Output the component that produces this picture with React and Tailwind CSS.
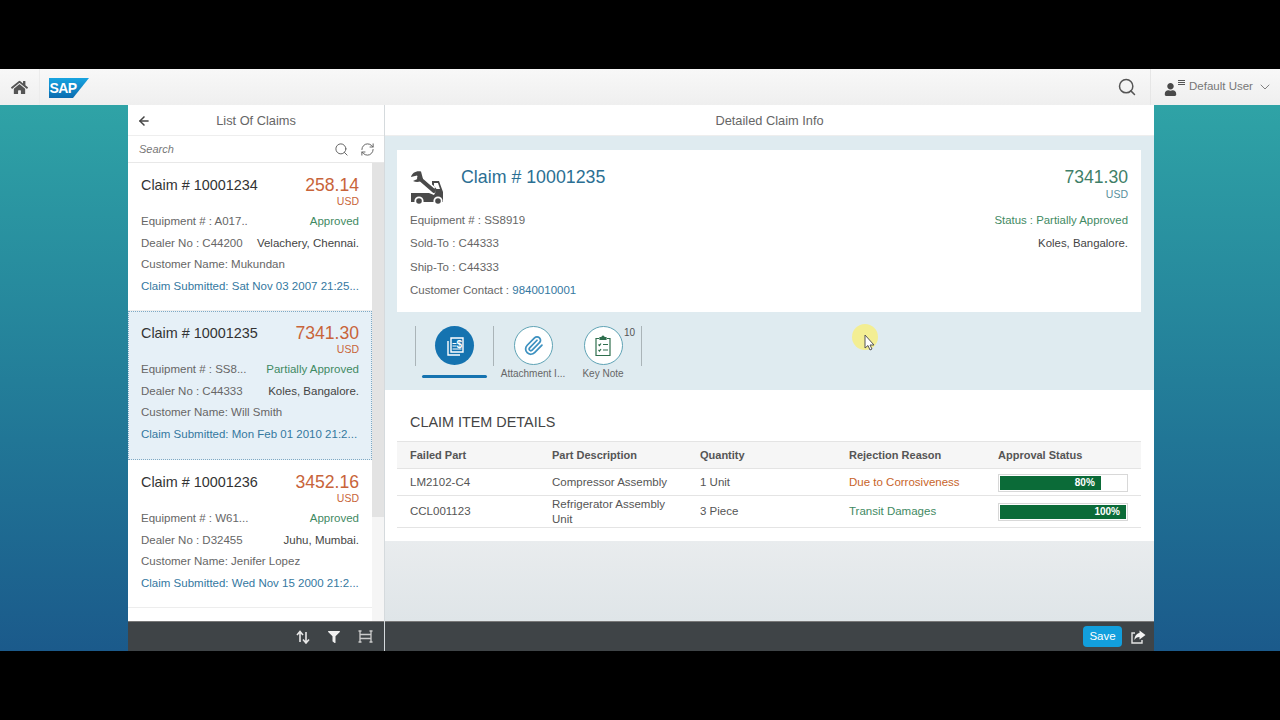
import { ArrowLeft, ChevronDown, Paperclip, RefreshCw, Search } from "lucide-react";
import { FaFilter, FaHome, FaUser } from "react-icons/fa";

const claims = [
    { id: "10001234", amount: "258.14", equipment: "A017..", status: "Approved", dealer: "C44200", place: "Velachery, Chennai.", customer: "Mukundan", submitted: "Sat Nov 03 2007 21:25..." },
    { id: "10001235", amount: "7341.30", equipment: "SS8...", status: "Partially Approved", dealer: "C44333", place: "Koles, Bangalore.", customer: "Will Smith", submitted: "Mon Feb 01 2010 21:2...", selected: true },
    { id: "10001236", amount: "3452.16", equipment: "W61...", status: "Approved", dealer: "D32455", place: "Juhu, Mumbai.", customer: "Jenifer Lopez", submitted: "Wed Nov 15 2000 21:2..." },
];

const SapLogo = () => (
    <svg width="40" height="20" viewBox="0 0 40 20">
        <defs>
            <linearGradient id="sapBlue" x1="0" y1="0" x2="0" y2="1">
                <stop offset="0" stopColor="#18a4e0" />
                <stop offset="1" stopColor="#0a6cb0" />
            </linearGradient>
        </defs>
        <polygon points="0,0 40,0 24,20 0,20" fill="url(#sapBlue)" />
        <text x="0.5" y="15" fontFamily="Liberation Sans" fontWeight="700" fontSize="14" fill="#fff" letterSpacing="-0.6">SAP</text>
    </svg>
);

const TowTruck = () => (
    <svg width="34" height="34" viewBox="0 0 34 34" fill="#4a4a4a">
        <path d="M1 22 H19 L24 24 L26 20 L22 14 V10 H29 L33 21 V31 H1 Z" />
        <path d="M24 12 V15 L26.5 18 H30 L28 12 Z" fill="#fff" />
        <path d="M9 7 L23 19" stroke="#fff" strokeWidth="7" />
        <path d="M9 7 L24 20" stroke="#4a4a4a" strokeWidth="4" strokeLinecap="round" />
        <path d="M11 0.5 C6 -0.5 2 2 1 6 L7 4.5 L8.5 7.5 L3 10 C7 12 11 11 13 8 Z" />
        <circle cx="9" cy="30" r="4.6" fill="#fff" />
        <circle cx="9" cy="30" r="2.8" />
        <circle cx="28" cy="30" r="4.6" fill="#fff" />
        <circle cx="28" cy="30" r="2.8" />
    </svg>
);

const InvoiceIcon = () => (
    <svg width="22" height="22" viewBox="0 0 22 22" fill="none" stroke="#fff" strokeWidth="1.4">
        <path d="M7 3 H19 V17 H7 Z" />
        <path d="M4 6 V20 H16" />
        <path d="M8.5 8.5 H12.5 M8.5 11 H12.5 M8.5 14 H17.5" strokeWidth="1.2" />
        <text x="12.6" y="12.5" fontFamily="Liberation Sans" fontWeight="700" fontSize="10" fill="#fff" stroke="none">$</text>
    </svg>
);

const ClipboardIcon = () => (
    <svg width="20" height="22" viewBox="0 0 20 22" fill="none" stroke="#2f6f4e" strokeWidth="1.2">
        <path d="M6 3.5 H3 V20.5 H17 V3.5 H14" />
        <path d="M7 4.5 V2.5 H8.5 L10 1 L11.5 2.5 H13 V4.5 Z" fill="#2f6f4e" />
        <path d="M5.5 9.5 L6.5 10.5 L8 8.5 M10 9.5 H15 M5.5 15 L6.5 16 L8 14 M10 15 H15" />
    </svg>
);

const SortIcon = () => (
    <svg width="14" height="14" viewBox="0 0 14 14" fill="none" stroke="#e8e8e8" strokeWidth="1.6">
        <path d="M4 12 V2 M1 5 L4 1.5 L7 5" />
        <path d="M10 2 V13 M7 9.5 L10 13 L13 9.5" />
    </svg>
);

const ColumnsIcon = () => (
    <svg width="15" height="13" viewBox="0 0 15 13" fill="none" stroke="#ccc" strokeWidth="1.3">
        <path d="M2 1 V12 M13 1 V12 M0.5 1 H3.5 M11.5 1 H14.5 M0.5 12 H3.5 M11.5 12 H14.5 M2 4.5 H13 M2 8.5 H13" />
    </svg>
);

const ShareIcon = () => (
    <svg width="15" height="14" viewBox="0 0 15 14">
        <path d="M4 3 H1 V13 H11 V10" fill="none" stroke="#e4e4e4" strokeWidth="1.4" />
        <path d="M8.5 0.5 L14.5 5 L8.5 9.5 V7 C6 7 4.5 8 3.5 10 C3.5 6 5.5 3.5 8.5 3 Z" fill="#f4f4f4" />
    </svg>
);

const ClaimCard = ({ claim }) => (
    <div className={claim.selected
        ? "h-[149px] px-[12px] pt-[10px] bg-[#e6f0f7] border border-dotted border-[#7fa9c4]"
        : "h-[148px] px-[13px] pt-[11px] bg-white border-b border-[#ededed]"}>
        <div className="flex justify-between items-start h-[37px]">
            <span className="text-[14.4px] text-[#333] leading-[21px] mt-[1px]">Claim # {claim.id}</span>
            <div className="text-right text-[#c8643a]">
                <div className="text-[17.6px] leading-[22px]">{claim.amount}</div>
                <div className="text-[10.5px] leading-[11px]">USD</div>
            </div>
        </div>
        <div className="text-[11.5px] text-[#666] leading-[21.5px]">
            <div className="flex justify-between">
                <span>Equipment # : {claim.equipment}</span>
                <span className="text-[#3f8a63]">{claim.status}</span>
            </div>
            <div className="flex justify-between">
                <span>Dealer No : {claim.dealer}</span>
                <span className="text-[#444]">{claim.place}</span>
            </div>
            <div>Customer Name: {claim.customer}</div>
            <div className="text-[#34789f] whitespace-nowrap">Claim Submitted: {claim.submitted}</div>
        </div>
    </div>
);

const Tab = ({ label, badge, active, children }) => (
    <div className="relative w-[70px] flex flex-col items-center pt-[14px]">
        <div className={`w-[39px] h-[39px] rounded-full flex items-center justify-center ${active ? "bg-[#1573b0]" : "bg-white border border-[#5fa3b5]"}`}>
            {children}
        </div>
        {badge && <span className="absolute top-[13px] right-[3px] text-[10px] text-[#555]">{badge}</span>}
        {label && <span className="mt-[2px] text-[10px] text-[#666] whitespace-nowrap h-[13px] leading-[13px]">{label}</span>}
        {active && <div className="w-[65px] h-[3px] bg-[#1573b0] mt-[10px] rounded-sm" />}
    </div>
);

const ProgressBar = ({ value }) => (
    <div className="w-[130px] h-[18px] bg-white border border-[#d8d8d8] p-px">
        <div className="h-full bg-[#0b6b38] text-right text-white text-[10px] font-bold leading-[14px] pr-[6px]" style={{ width: `${value}%` }}>{value}%</div>
    </div>
);

const rowClass = "grid grid-cols-[142px_148px_149px_149px_156px] items-center border-b border-[#e4e4e4] text-[11.5px] text-[#555]";

export default function App() {
    return (
        <div className="w-[1280px] h-[720px] bg-black flex flex-col pt-[69px] pb-[69px] overflow-hidden font-['Liberation_Sans',Arial,sans-serif]">
            <div className="h-[36px] shrink-0 bg-gradient-to-b from-[#f8f8f8] to-[#efefef] flex items-center">
                <div className="w-[40px] flex justify-center border-r border-[#ececec] h-full items-center">
                    <FaHome size={17} className="text-[#555]" />
                </div>
                <div className="ml-[9px] mt-[2px]"><SapLogo /></div>
                <div className="flex-1" />
                <Search size={20} strokeWidth={1.8} className="text-[#555] mr-[13px]" />
                <div className="h-full border-l border-[#e6e6e6] flex items-center pl-[13px] w-[130px] text-[#777] text-[11.5px] whitespace-nowrap">
                    <FaUser size={13} className="text-[#4a4a4a] mt-[4px] shrink-0" />
                    <div className="w-[7px] mr-[4px] mb-[9px] flex flex-col gap-px ml-px shrink-0">
                        <div className="h-px bg-[#555]" />
                        <div className="h-px bg-[#555]" />
                        <div className="h-px bg-[#555]" />
                    </div>
                    <span>Default User</span>
                    <ChevronDown size={16} strokeWidth={1.4} className="ml-[4px] shrink-0" />
                </div>
            </div>

            <div className="relative flex-1 min-h-0 flex justify-center pl-[2px] bg-gradient-to-b from-[#2fa3a6] to-[#1b5a8b]">
                <div className="w-[257px] flex flex-col border-r border-[#d5dadd]">
                    <div className="h-[31px] pt-px bg-white flex items-center relative justify-center text-[12.8px] text-[#666] border-b border-[#eee]">
                        <ArrowLeft size={14} strokeWidth={2.6} className="absolute left-[9px] text-[#444]" />
                        <span>List Of Claims</span>
                    </div>
                    <div className="h-[27px] bg-white flex items-center pl-[11px] pr-[9px] border-b border-[#e8e8e8]">
                        <span className="flex-1 italic text-[11px] text-[#777]">Search</span>
                        <Search size={15} strokeWidth={1.6} className="text-[#666] mr-[11px]" />
                        <RefreshCw size={15} strokeWidth={1.6} className="text-[#666]" />
                    </div>
                    <div className="flex-1 min-h-0 flex bg-white overflow-hidden">
                        <div className="w-[244px] shrink-0">
                            {claims.map((c) => <ClaimCard key={c.id} claim={c} />)}
                        </div>
                        <div className="flex-1 flex flex-col">
                            <div className="h-[354px] bg-[#e3e3e3]" />
                            <div className="flex-1 bg-[#f5f5f5]" />
                        </div>
                    </div>
                    <div className="h-[30px] bg-[#3f4447] border-t border-[#777] flex items-center justify-end gap-[18px] pr-[11px] text-white">
                        <SortIcon />
                        <FaFilter size={12} className="text-[#f0f0f0]" />
                        <ColumnsIcon />
                    </div>
                </div>

                <div className="w-[769px] flex flex-col">
                    <div className="h-[31px] pt-px bg-white flex items-center justify-center text-[12.8px] text-[#666] border-b border-[#eee]">Detailed Claim Info</div>
                    <div className="h-[254px] bg-[#dfebf0] pl-[12px] pr-[13px] pt-[14px] flex flex-col">
                        <div className="h-[162px] bg-white px-[13px] pt-[15px] text-[11.5px] text-[#666] shrink-0">
                            <div className="flex justify-between items-start h-[44px]">
                                <div className="flex items-start">
                                    <div className="mt-[6px] w-[51px]"><TowTruck /></div>
                                    <span className="text-[17.8px] text-[#2b6f93] leading-[24px]">Claim # 10001235</span>
                                </div>
                                <div className="text-right">
                                    <div className="text-[17.6px] text-[#3f7f68] leading-[24px]">7341.30</div>
                                    <div className="text-[10.5px] text-[#5a8f9d] leading-[11px]">USD</div>
                                </div>
                            </div>
                            <div className="leading-[23.3px] flex justify-between">
                                <div>
                                    <div>Equipment # : SS8919</div>
                                    <div>Sold-To : C44333</div>
                                    <div>Ship-To : C44333</div>
                                    <div>Customer Contact : <span className="text-[#34789f]">9840010001</span></div>
                                </div>
                                <div className="text-right text-[11.4px]">
                                    <div className="text-[#3f8a63]">Status : Partially Approved</div>
                                    <div className="text-[#444]">Koles, Bangalore.</div>
                                </div>
                            </div>
                        </div>
                        <div className="flex pl-[18px]">
                            <div className="w-px h-[40px] bg-[#aab4b8] mt-[14px]" />
                            <div className="w-[77px] flex justify-center">
                                <Tab active>
                                    <InvoiceIcon />
                                </Tab>
                            </div>
                            <div className="w-px h-[40px] bg-[#aab4b8] mt-[14px]" />
                            <div className="w-[78px] flex justify-center">
                                <Tab label="Attachment I...">
                                    <Paperclip size={21} strokeWidth={2} className="text-[#3d91c0]" />
                                </Tab>
                            </div>
                            <div className="w-[70px] flex justify-center ml-[-4px] mr-[-6px]">
                                <Tab label="Key Note" badge="10">
                                    <ClipboardIcon />
                                </Tab>
                            </div>
                            <div className="w-px h-[40px] bg-[#aab4b8] mt-[14px] ml-[9px]" />
                        </div>
                    </div>
                    <div className="h-[151px] bg-white pl-[12px] pr-[13px]">
                        <div className="h-[51px] pl-[13px] pt-[23px] text-[14.4px] text-[#444] leading-[18px]">CLAIM ITEM DETAILS</div>
                        <div className={`${rowClass} h-[28px] bg-[#f6f6f6] border-t font-bold`}>
                            <span className="pl-[13px] text-[11px]">Failed Part</span>
                            <span className="pl-[13px] text-[11px]">Part Description</span>
                            <span className="pl-[13px] text-[11px]">Quantity</span>
                            <span className="pl-[13px] text-[11px]">Rejection Reason</span>
                            <span className="pl-[13px] text-[11px]">Approval Status</span>
                        </div>
                        <div className={`${rowClass} h-[27px] pt-[2px]`}>
                            <span className="pl-[13px]">LM2102-C4</span>
                            <span className="pl-[13px]">Compressor Assembly</span>
                            <span className="pl-[13px]">1 Unit</span>
                            <span className="pl-[13px] text-[#c8642a]">Due to Corrosiveness</span>
                            <span className="pl-[13px]"><ProgressBar value={80} /></span>
                        </div>
                        <div className={`${rowClass} h-[32px]`}>
                            <span className="pl-[13px]">CCL001123</span>
                            <span className="pl-[13px] leading-[15px]">Refrigerator Assembly Unit</span>
                            <span className="pl-[13px]">3 Piece</span>
                            <span className="pl-[13px] text-[#3f8a63]">Transit Damages</span>
                            <span className="pl-[13px]"><ProgressBar value={100} /></span>
                        </div>
                    </div>
                    <div className="flex-1 bg-gradient-to-b from-[#e9ecee] to-[#dfe5e8]" />
                    <div className="h-[30px] bg-[#3f4447] border-t border-[#777] flex items-center justify-end pr-[8px]">
                        <div className="w-[39px] h-[21px] bg-[#129fdd] rounded-sm text-white text-[11.5px] flex items-center justify-center">Save</div>
                        <div className="ml-[9px]"><ShareIcon /></div>
                    </div>
                </div>

                <div className="absolute left-[852px] top-[219px] w-[26px] h-[26px] rounded-full bg-[#f3ee93]" />
                <svg className="absolute left-[864px] top-[229px]" width="12" height="18" viewBox="0 0 12 18">
                    <path d="M1 1 V14 L4 11.5 L6 16 L8 15 L6 11 H10 Z" fill="#fff" stroke="#555" strokeWidth="1" />
                </svg>
            </div>
        </div>
    );
}
